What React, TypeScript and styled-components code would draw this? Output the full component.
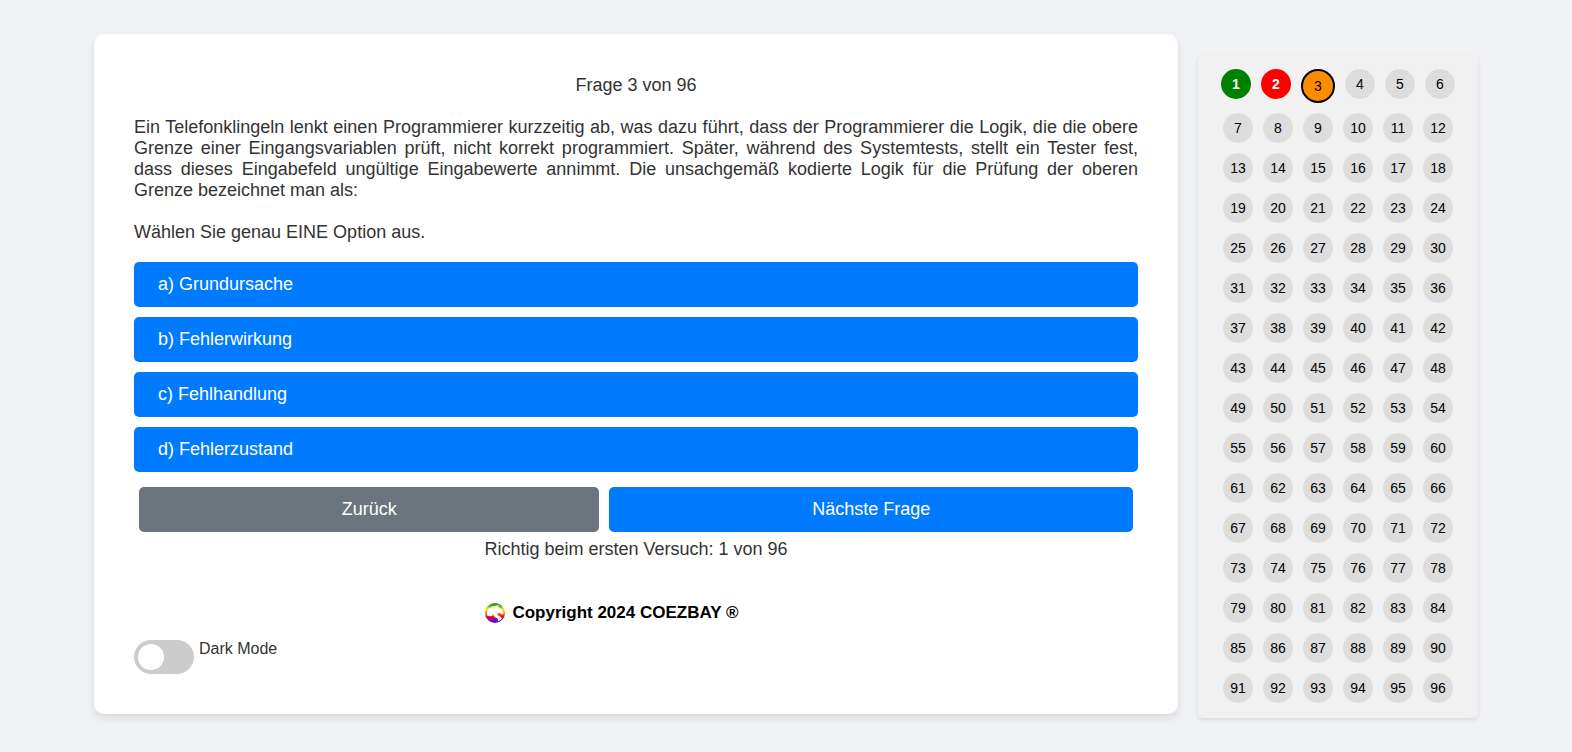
import React, { useState } from "react";
import styled, { createGlobalStyle, css } from "styled-components";

const GlobalStyle = createGlobalStyle`
  *, *::before, *::after { box-sizing: border-box; }
  body {
    margin: 0;
    background: #f0f2f5;
    color: #333;
    font-family: Helvetica, "Liberation Sans", Arial, sans-serif;
    font-size: 18px;
    line-height: 21px;
  }
`;

const Page = styled.div`
  display: flex;
  align-items: center;
  min-height: 100vh;
  padding: 0 94px;
`;

const Layout = styled.div`
  display: flex;
  flex: 1;
  align-items: flex-start;
  gap: 20px;
`;

const Card = styled.main`
  flex: 1;
  min-width: 0;
  padding: 41px 40px 40px;
  background: #fff;
  border-radius: 10px;
  box-shadow: 0 4px 8px rgba(0, 0, 0, 0.1);
`;

const Progress = styled.p`
  margin: 0 0 21px;
  text-align: center;
`;

const Question = styled.p`
  margin: 0 0 21px;
  text-align: justify;
`;

const Hint = styled.p`
  margin: 0 0 19px;
`;

const buttonBase = css`
  height: 45px;
  padding: 0 24px;
  border: 0;
  border-radius: 5px;
  color: #fff;
  font: inherit;
  cursor: pointer;
`;

const Options = styled.div`
  display: flex;
  flex-direction: column;
  gap: 10px;
`;

const OptionButton = styled.button`
  ${buttonBase}
  background: #007bff;
  text-align: left;
`;

const Navigation = styled.nav`
  display: flex;
  gap: 10px;
  padding: 15px 5px 7px;
`;

const NavButton = styled.button<{ $secondary?: boolean }>`
  ${buttonBase}
  flex: 1 1 auto;
  background: ${(p) => (p.$secondary ? "#6c757d" : "#007bff")};
`;

const Summary = styled.footer`
  width: fit-content;
  margin: 0 auto 17px;
`;

const Score = styled.p`
  margin: 0 0 42px;
`;

const Copyright = styled.a`
  display: flex;
  align-items: center;
  gap: 7px;
  padding-left: 1px;
  color: #000;
  font-size: 17px;
  font-weight: bold;
  text-decoration: none;
`;

const Toggle = styled.label`
  display: flex;
  align-items: flex-start;
  gap: 5px;
  width: fit-content;
  font-size: 16px;
  line-height: 18px;
  cursor: pointer;
`;

const Switch = styled.input`
  appearance: none;
  display: flex;
  align-items: center;
  width: 60px;
  height: 34px;
  margin: 0;
  padding: 4px;
  border-radius: 34px;
  background: #ccc;
  cursor: pointer;

  &::before {
    content: "";
    width: 26px;
    height: 26px;
    border-radius: 50%;
    background: #fff;
  }

  &:checked {
    justify-content: flex-end;
    background: #2196f3;
  }
`;

const Overview = styled.aside`
  display: flex;
  flex-wrap: wrap;
  align-items: flex-start;
  justify-content: center;
  gap: 10px;
  width: 280px;
  margin-top: 20px;
  padding: 15px;
  background: #f1f1f1;
  border-radius: 5px;
  box-shadow: 0 2px 4px rgba(0, 0, 0, 0.1);
`;

type Status = "open" | "right" | "wrong" | "current";

const fills: Record<Status, string> = {
  open: "#ddd",
  right: "green",
  wrong: "red",
  current: "#ff8c00",
};

const answered = css`
  color: #fff;
  font-weight: bold;
`;

const Bubble = styled.button<{ $status: Status }>`
  width: ${(p) => (p.$status === "current" ? 34 : 30)}px;
  height: ${(p) => (p.$status === "current" ? 34 : 30)}px;
  padding: 0;
  border: ${(p) => (p.$status === "current" ? "2px solid #000" : "0")};
  border-radius: 50%;
  background: ${(p) => fills[p.$status]};
  color: #000;
  font-family: inherit;
  font-size: 14px;
  line-height: 16px;
  cursor: pointer;
  ${(p) => (p.$status === "right" || p.$status === "wrong") && answered}
`;

const Logo = () => (
  <svg width="20" height="20" viewBox="0 0 20 20" aria-hidden="true">
    <defs>
      <linearGradient id="rainbow" x1="0" y1="0" x2="0" y2="1">
        <stop offset="0" stopColor="#158a35" />
        <stop offset="0.15" stopColor="#5cb510" />
        <stop offset="0.32" stopColor="#f6ee00" />
        <stop offset="0.5" stopColor="#ff8a00" />
        <stop offset="0.68" stopColor="#f00018" />
        <stop offset="0.86" stopColor="#7a10b0" />
        <stop offset="1" stopColor="#2a10f0" />
      </linearGradient>
    </defs>
    <circle cx="10" cy="10" r="10" fill="url(#rainbow)" />
    <path
      d="M2.200 12.500C1.500 7.500 4 4 8 3.200C10 2.700 12 3 13.500 1.800C13.600 2.800 13.300 3.300 12.800 3.700C15.500 4.600 16.800 6.800 18.500 9.500C18.700 10.800 17.800 11.500 17 11.300C15.800 10.300 14.500 10.200 13 9.800C12.300 10.300 12 11 12.500 11.800C13.500 13 16.500 13.500 16.800 15.500C16 17 14.500 17.800 13 18.200C13.800 16 12.500 15.300 10.500 14.500C8.500 13.800 8.300 12.500 8.700 11C7 13.800 4.500 13.800 2.200 12.500Z"
      fill="#fff"
    />
    <path d="M4.500 5.500C6.500 3.600 8.500 4.300 10.500 3.600" fill="none" stroke="#8ed05a" strokeWidth="0.6" />
  </svg>
);

const options = ["a) Grundursache", "b) Fehlerwirkung", "c) Fehlhandlung", "d) Fehlerzustand"];

const statuses: Record<number, Status> = { 1: "right", 2: "wrong", 3: "current" };

export default function App() {
  const [dark, setDark] = useState(false);
  return (
    <Page>
      <GlobalStyle />
      <Layout>
        <Card>
          <Progress>Frage 3 von 96</Progress>
          <Question>
            Ein Telefonklingeln lenkt einen Programmierer kurzzeitig ab, was dazu führt, dass der
            Programmierer die Logik, die die obere Grenze einer Eingangsvariablen prüft, nicht
            korrekt programmiert. Später, während des Systemtests, stellt ein Tester fest, dass
            dieses Eingabefeld ungültige Eingabewerte annimmt. Die unsachgemäß kodierte Logik für
            die Prüfung der oberen Grenze bezeichnet man als:
          </Question>
          <Hint>Wählen Sie genau EINE Option aus.</Hint>
          <Options>
            {options.map((text) => (
              <OptionButton key={text} type="button">
                {text}
              </OptionButton>
            ))}
          </Options>
          <Navigation>
            <NavButton type="button" $secondary>
              Zurück
            </NavButton>
            <NavButton type="button">Nächste Frage</NavButton>
          </Navigation>
          <Summary>
            <Score>Richtig beim ersten Versuch: 1 von 96</Score>
            <Copyright href="#">
              <Logo />
              Copyright 2024 COEZBAY ®
            </Copyright>
          </Summary>
          <Toggle>
            <Switch
              type="checkbox"
              checked={dark}
              onChange={(event) => setDark(event.target.checked)}
            />
            Dark Mode
          </Toggle>
        </Card>
        <Overview>
          {Array.from({ length: 96 }, (_, i) => i + 1).map((n) => (
            <Bubble key={n} type="button" $status={statuses[n] ?? "open"}>
              {n}
            </Bubble>
          ))}
        </Overview>
      </Layout>
    </Page>
  );
}
